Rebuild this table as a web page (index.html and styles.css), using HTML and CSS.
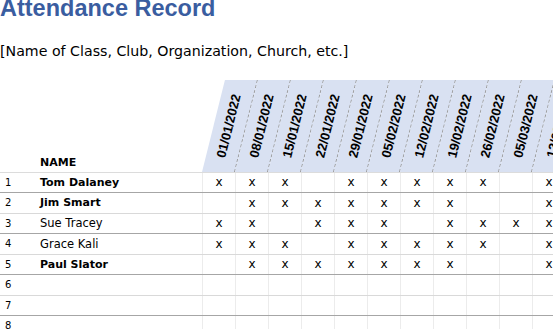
FILE: index.html
```html
<!DOCTYPE html>
<html>
<head>
<meta charset="utf-8">
<link rel="stylesheet" href="styles.css">
</head>
<body>
<div class="sheet">
  <h1 class="title">Attendance Record</h1>
  <p class="subtitle">[Name of Class, Club, Organization, Church, etc.]</p>
  <div class="table">
    <div class="head">
      <div class="num"></div>
      <div class="name name-head">NAME</div>
      <div class="dates">
        <div class="date"><span>01/01/2022</span></div>
        <div class="date"><span>08/01/2022</span></div>
        <div class="date"><span>15/01/2022</span></div>
        <div class="date"><span>22/01/2022</span></div>
        <div class="date"><span>29/01/2022</span></div>
        <div class="date"><span>05/02/2022</span></div>
        <div class="date"><span>12/02/2022</span></div>
        <div class="date"><span>19/02/2022</span></div>
        <div class="date"><span>26/02/2022</span></div>
        <div class="date"><span>05/03/2022</span></div>
        <div class="date"><span>12/03/2022</span></div>
      </div>
    </div>
    <div class="row odd">
      <div class="num">1</div><div class="name bold">Tom Dalaney</div>
      <div class="mark">x</div><div class="mark">x</div><div class="mark">x</div><div class="mark"></div><div class="mark">x</div><div class="mark">x</div><div class="mark">x</div><div class="mark">x</div><div class="mark">x</div><div class="mark"></div><div class="mark">x</div>
    </div>
    <div class="row even">
      <div class="num">2</div><div class="name bold">Jim Smart</div>
      <div class="mark"></div><div class="mark">x</div><div class="mark">x</div><div class="mark">x</div><div class="mark">x</div><div class="mark">x</div><div class="mark">x</div><div class="mark">x</div><div class="mark"></div><div class="mark"></div><div class="mark">x</div>
    </div>
    <div class="row odd">
      <div class="num">3</div><div class="name">Sue Tracey</div>
      <div class="mark">x</div><div class="mark">x</div><div class="mark"></div><div class="mark">x</div><div class="mark">x</div><div class="mark">x</div><div class="mark"></div><div class="mark">x</div><div class="mark">x</div><div class="mark">x</div><div class="mark">x</div>
    </div>
    <div class="row even">
      <div class="num">4</div><div class="name">Grace Kali</div>
      <div class="mark">x</div><div class="mark">x</div><div class="mark">x</div><div class="mark"></div><div class="mark">x</div><div class="mark">x</div><div class="mark">x</div><div class="mark">x</div><div class="mark">x</div><div class="mark"></div><div class="mark">x</div>
    </div>
    <div class="row odd">
      <div class="num">5</div><div class="name bold">Paul Slator</div>
      <div class="mark"></div><div class="mark">x</div><div class="mark">x</div><div class="mark">x</div><div class="mark">x</div><div class="mark">x</div><div class="mark">x</div><div class="mark">x</div><div class="mark"></div><div class="mark"></div><div class="mark">x</div>
    </div>
    <div class="row even">
      <div class="num">6</div><div class="name"></div>
      <div class="mark"></div><div class="mark"></div><div class="mark"></div><div class="mark"></div><div class="mark"></div><div class="mark"></div><div class="mark"></div><div class="mark"></div><div class="mark"></div><div class="mark"></div><div class="mark"></div>
    </div>
    <div class="row odd">
      <div class="num">7</div><div class="name"></div>
      <div class="mark"></div><div class="mark"></div><div class="mark"></div><div class="mark"></div><div class="mark"></div><div class="mark"></div><div class="mark"></div><div class="mark"></div><div class="mark"></div><div class="mark"></div><div class="mark"></div>
    </div>
    <div class="row even">
      <div class="num">8</div><div class="name"></div>
      <div class="mark"></div><div class="mark"></div><div class="mark"></div><div class="mark"></div><div class="mark"></div><div class="mark"></div><div class="mark"></div><div class="mark"></div><div class="mark"></div><div class="mark"></div><div class="mark"></div>
    </div>
  </div>
</div>
</body>
</html>
```

FILE: styles.css
```css
html, body {
  margin: 0;
  padding: 0;
  background: #ffffff;
}
body {
  width: 553px;
  height: 329px;
  overflow: hidden;
  font-family: "DejaVu Sans", Verdana, sans-serif;
  color: #000;
}
.sheet {
  width: 620px;
}
.title {
  margin: -3px 0 0 0;
  font-family: "Liberation Sans", Arial, sans-serif;
  font-weight: bold;
  font-size: 23.5px;
  line-height: 23px;
  color: #3a5da0;
}
.subtitle {
  margin: 23px 0 0 0;
  font-size: 14.2px;
  line-height: 16px;
}
.table {
  margin-top: 21px;
}
.head {
  display: flex;
  height: 93px;
  border-bottom: 1px solid #dcdcdc;
  box-sizing: border-box;
}
.num {
  width: 32px;
  flex: none;
  padding-left: 5px;
  box-sizing: border-box;
  font-size: 10px;
}
.name {
  width: 170px;
  flex: none;
  padding-left: 8px;
  box-sizing: border-box;
  font-size: 11.5px;
  white-space: nowrap;
}
.bold {
  font-weight: bold;
  font-size: 11px;
}
.name-head {
  align-self: flex-end;
  font-weight: bold;
  font-size: 11px;
  line-height: 13px;
  padding-bottom: 3px;
}
.dates {
  display: flex;
  flex: none;
}
.date {
  width: 33px;
  height: 92px;
  flex: none;
  box-sizing: border-box;
  background: #d9e1f2;
  border-right: 1px dashed #9a9a9a;
  transform: skewX(-14deg);
  transform-origin: bottom left;
  display: flex;
  align-items: center;
  justify-content: center;
}
.date span {
  display: block;
  white-space: nowrap;
  font-family: "Liberation Sans", Arial, sans-serif;
  font-weight: bold;
  font-size: 13px;
  line-height: 14px;
  transform: skewX(14deg) rotate(-76deg);
}
.row {
  display: flex;
  box-sizing: border-box;
  align-items: stretch;
}
.row.odd {
  height: 20px;
  line-height: 19px;
  border-bottom: 1px solid #a6a6a6;
}
.row.even {
  height: 21px;
  line-height: 20px;
  border-bottom: 1px solid #d9d9d9;
}
.mark {
  width: 33px;
  flex: none;
  box-sizing: border-box;
  border-left: 1px solid #ececec;
  text-align: center;
  font-size: 12px;
}
```
